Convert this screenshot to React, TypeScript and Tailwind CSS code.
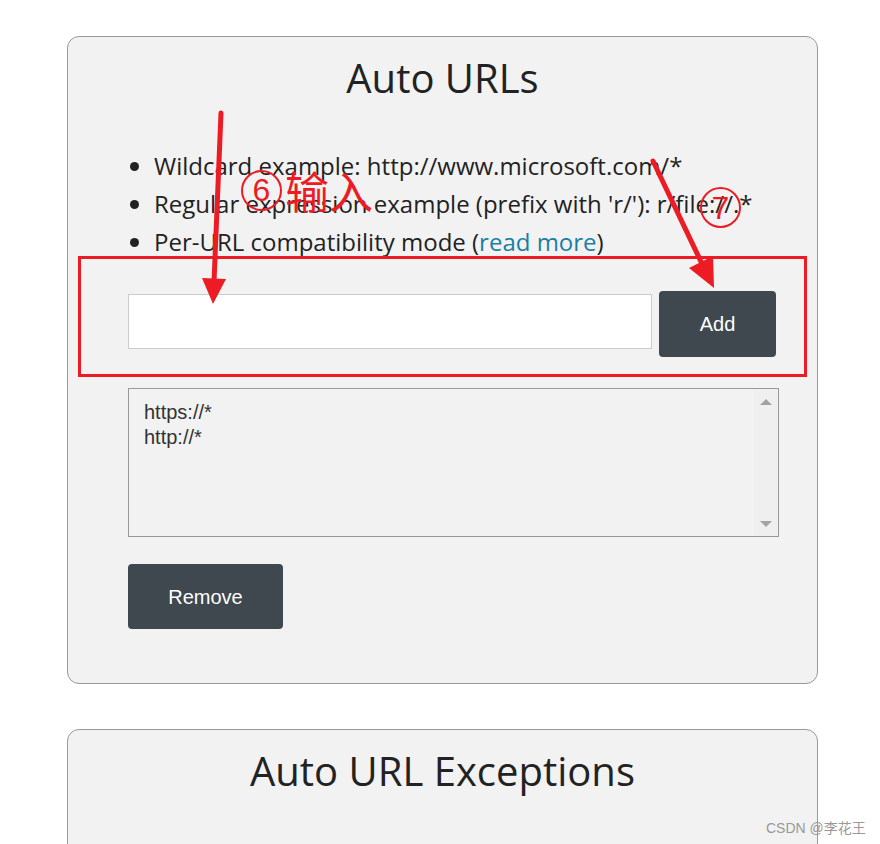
const Circled = ({ n }: { n: string }) => (
    <span className="inline-flex items-center justify-center w-[41px] h-[41px] rounded-full border-[2px] border-[#ed1c24] text-[32px] leading-none font-['Liberation_Sans',Arial,sans-serif]">{n}</span>
);

const AutoUrls = () => {
    return (
        <div className="relative w-full min-h-[1000px] bg-white pt-[36px] pl-[67px] font-['Open_Sans',sans-serif] text-[#222]">
            <div className="w-[751px] border border-[#999] rounded-[12px] bg-[#f2f2f2] pt-[17px] pb-[54px] flex flex-col">
                <h1 className="text-center text-[40px] leading-[48px] font-normal">Auto URLs</h1>
                <div className="pl-[60px] flex flex-col items-start">
                    <ul className="mt-[45px] list-disc pl-[26px] text-[24px] leading-[38px]">
                        <li>Wildcard example: http://www.microsoft.com/*</li>
                        <li>Regular expression example (prefix with 'r/'): r/file://.*</li>
                        <li>
                            Per-URL compatibility mode (<span className="text-[#1a7fa3]">read more</span>)
                        </li>
                    </ul>
                    <div className="mt-[30px] flex items-start gap-[7px] w-[651px]">
                        <input type="text" className="mt-[3px] w-[524px] h-[55px] bg-white border border-[#ccc] outline-none" />
                        <button className="w-[117px] h-[66px] rounded-[4px] bg-[#3f474f] text-white text-[20px] font-['Liberation_Sans',Arial,sans-serif]">Add</button>
                    </div>
                    <div className="mt-[31px] w-[651px] h-[149px] border border-[#999] flex">
                        <div className="flex-1 pl-[15px] pt-[11px] text-[20px] leading-[25px] text-[#333] font-['Liberation_Sans',Arial,sans-serif]">
                            <div>https://*</div>
                            <div>http://*</div>
                        </div>
                        <div className="w-[24px] bg-[#efefef] flex flex-col items-center justify-between pt-[10px] pb-[9px]">
                            <div className="w-0 h-0 border-l-[6px] border-r-[6px] border-b-[6px] border-l-transparent border-r-transparent border-b-[#a3a3a3]" />
                            <div className="w-0 h-0 border-l-[6px] border-r-[6px] border-t-[6px] border-l-transparent border-r-transparent border-t-[#a3a3a3]" />
                        </div>
                    </div>
                    <button className="mt-[27px] w-[155px] h-[65px] rounded-[4px] bg-[#3f474f] text-white text-[20px] font-['Liberation_Sans',Arial,sans-serif]">Remove</button>
                </div>
            </div>

            <div className="mt-[45px] w-[751px] h-[220px] border border-[#999] rounded-[12px] bg-[#f2f2f2] pt-[17px]">
                <h2 className="text-center text-[40px] leading-[48px] font-normal">Auto URL Exceptions</h2>
            </div>

            {/* annotations drawn over the screenshot */}
            <div className="absolute left-[78px] top-[256px] w-[729px] h-[121px] border-[3px] border-[#ed1c24] pointer-events-none" />
            <svg className="absolute left-0 top-0 pointer-events-none" width="880" height="844">
                <line x1="221" y1="113" x2="214" y2="282" stroke="#ed1c24" strokeWidth="5" strokeLinecap="round" />
                <polygon points="202,278 226,279 213,304" fill="#ed1c24" />
                <line x1="653" y1="161" x2="704" y2="268" stroke="#ed1c24" strokeWidth="5" strokeLinecap="round" />
                <polygon points="689,268 713,256 714,288" fill="#ed1c24" />
            </svg>
            <div className="absolute left-[241px] top-[166px] flex items-center gap-[3px] text-[#ed1c24] pointer-events-none">
                <Circled n="6" />
                <span className="text-[44px] leading-[48px] font-['Noto_Sans_CJK_SC',sans-serif]">输入</span>
            </div>
            <div className="absolute left-[700px] top-[187px] text-[#ed1c24] pointer-events-none">
                <Circled n="7" />
            </div>
            <div className="absolute left-[766px] top-[819px] text-[14px] leading-[18px] text-[#999] font-['Liberation_Sans','Noto_Sans_CJK_SC',sans-serif]">CSDN @李花王</div>
        </div>
    )
}

export default AutoUrls;
